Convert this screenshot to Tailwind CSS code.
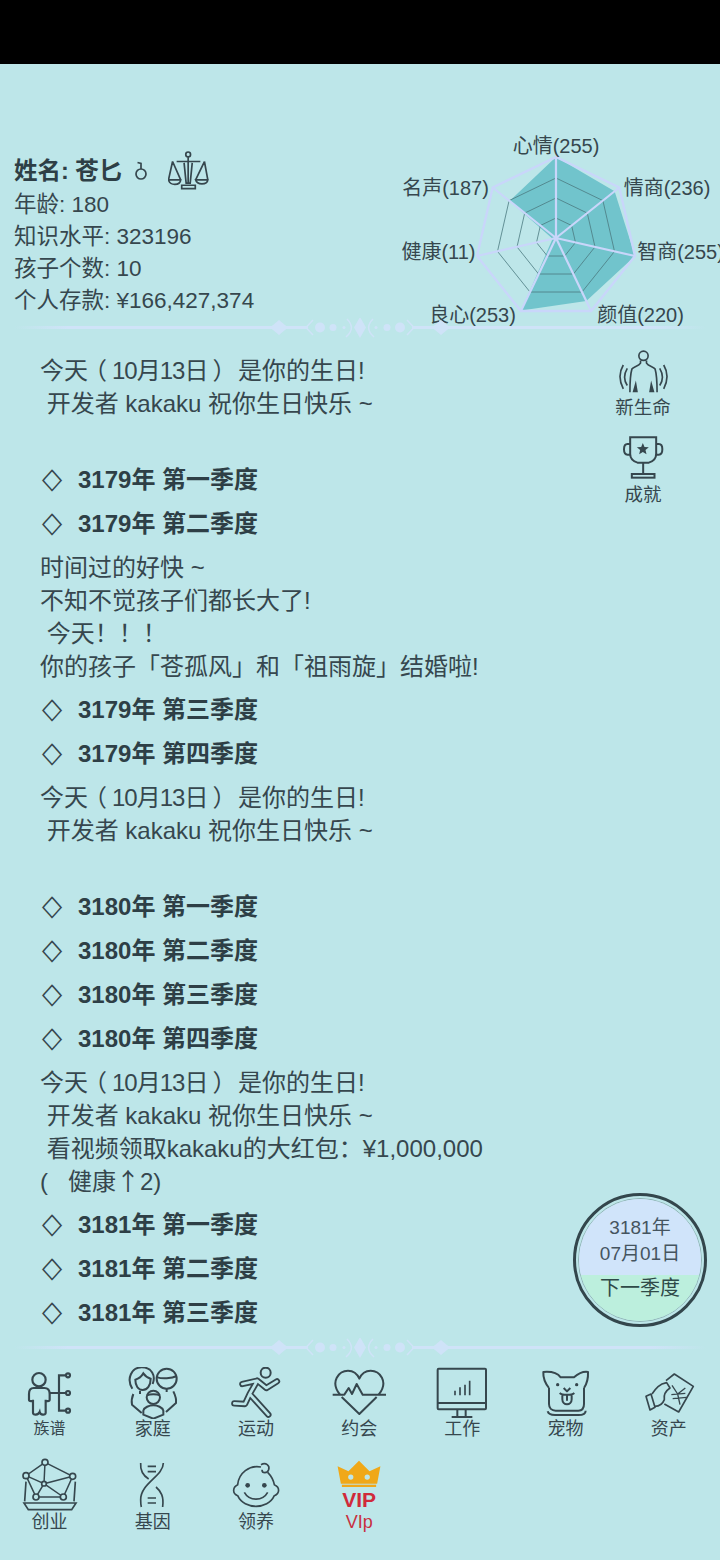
<!DOCTYPE html>
<html lang="zh"><head><meta charset="utf-8">
<script src="https://cdn.jsdelivr.net/npm/@tailwindcss/browser@4"></script>
</head>
<body class="m-0">
<div class="relative w-[720px] h-[1560px] overflow-hidden bg-[#bde6e9] text-[#36474e] font-['Liberation_Sans','Noto_Sans_CJK_SC',sans-serif]">
  <div class="h-16 bg-black"></div>

  <!-- header -->
  <div class="flex h-[254px]">
    <div class="flex-1 pl-[14px] pt-[91px] text-[22.5px] leading-[32px]">
      <div class="flex items-center h-8 font-bold text-[#2e3f46] text-[23.5px] mb-[2px]">
        <span>姓名: 苍匕</span>
        <svg class="ml-[11px]" width="16" height="20" viewBox="0 0 16 20" fill="none" stroke="#36474e" stroke-width="1.7"><circle cx="8" cy="13" r="5"/><path d="M8 8V2.500L4.500 1.500"/></svg>
        <svg class="ml-[19px]" width="41" height="40" viewBox="505 65 120 118" fill="none" stroke="#36474e" stroke-width="5"><circle cx="564" cy="75" r="7"/><path d="M564 82V160M530 96H600M518 96L506 150M518 96L542 150M612 96L586 150M612 96L622 150M506 150H542C540 168 510 168 506 150ZM586 150H622C620 166 590 166 586 150ZM552 100L558 160H570L576 100M545 176H585V166H545Z"/></svg>
      </div>
      <div>年龄: 180</div>
      <div>知识水平: 323196</div>
      <div>孩子个数: 10</div>
      <div>个人存款: ¥166,427,374</div>
    </div>
    <div class="w-[330px] shrink-0 pt-[61px]">
      <svg width="330" height="193" viewBox="390 125 330 193" class="overflow-visible">
        <g transform="translate(556 238)" fill="none">
          <polygon points="0,-81 58.6,-46.7 79,18 30.3,63 -34.8,72.4 -3.4,.8 -46.4,-37" fill="#71c4cc" stroke="none"/>
          <polygon points="0,-20 15.6,-12.5 19.5,4.5 8.7,18 -8.7,18 -19.5,4.5 -15.6,-12.5" stroke="#4b7a80" stroke-width=".8"/>
          <polygon points="0,-40 31.3,-24.9 39,8.9 17.4,36 -17.4,36 -39,8.9 -31.3,-24.9" stroke="#4b7a80" stroke-width=".8"/>
          <polygon points="0,-60 46.9,-37.4 58.5,13.4 26,54 -26,54 -58.5,13.4 -46.9,-37.4" stroke="#4b7a80" stroke-width=".8"/>
          <polygon points="0,-81 63.3,-50.5 79,18 35.1,73 -35.1,73 -79,18 -63.3,-50.5" stroke="#c9d6fa" stroke-width="2.4"/>
          <path d="M0 0V-81M0 0L63.3 -50.5M0 0L79 18M0 0L35.1 73M0 0L-35.1 73M0 0L-79 18M0 0L-63.3 -50.5" stroke="#c9d6fa" stroke-width="2.2"/>
        </g>
        <g font-size="20" fill="#36474e" text-anchor="middle">
          <text x="556" y="153">心情(255)</text>
          <text x="667" y="195">情商(236)</text>
          <text x="680.500" y="259">智商(255)</text>
          <text x="640.500" y="322">颜值(220)</text>
          <text x="472.500" y="322">良心(253)</text>
          <text x="438.500" y="259">健康(11)</text>
          <text x="445.500" y="195">名声(187)</text>
        </g>
      </svg>
    </div>
  </div>

  <!-- divider -->
  <svg class="block" width="720" height="20" viewBox="0 318 720 20" fill="#cfe3f8">
    <defs><linearGradient id="fade" x1="0" x2="1" y1="0" y2="0"><stop offset="0" stop-color="#cfe3f8" stop-opacity="0"/><stop offset=".15" stop-color="#cfe3f8"/><stop offset=".85" stop-color="#cfe3f8"/><stop offset="1" stop-color="#cfe3f8" stop-opacity="0"/></linearGradient></defs>
    <rect x="14" y="326" width="360" height="3" fill="url(#fade)" clip-path="inset(0 66px 0 0)"/><rect x="346" y="326" width="360" height="3" fill="url(#fade)" clip-path="inset(0 0 0 66px)"/>
    <path d="M279 320L288 327.500L279 335L270 327.500ZM441 320L450 327.500L441 335L432 327.500ZM360 317L366 327.500L360 338L354 327.500Z"/>
    <circle cx="320" cy="327.500" r="5"/><circle cx="333" cy="327.500" r="3.500"/><circle cx="344" cy="327.500" r="1.500"/><circle cx="376" cy="327.500" r="1.500"/><circle cx="387" cy="327.500" r="3.500"/><circle cx="400" cy="327.500" r="5"/>
    <path d="M313 320L306 327.500L313 335M347 319C353 325 353 331 346 337M373 319C367 325 367 331 374 337M407 320L414 327.500L407 335" fill="none" stroke="#cfe3f8" stroke-width="1.500"/>
  </svg>

  <!-- list -->
  <div class="h-[1000px] overflow-hidden pl-10 pt-[16px] text-[24px] leading-[33px]">
    <div class="pb-[4px] whitespace-pre-wrap"><div>今天<span class="relative -left-[5px] font-['Noto_Sans_CJK_TC'] leading-[0]">（</span><span class="tracking-[-1px]">10月13日</span><span class="relative left-[5px] font-['Noto_Sans_CJK_TC'] leading-[0]">）</span> 是你的生日!</div><div> 开发者 kakaku 祝你生日快乐 ~</div><div> </div></div>
    <div class="flex items-center h-11 font-bold text-[#2e3f46]"><span class="w-[38px] font-normal font-['DejaVu_Sans'] text-[#36474e] leading-[0]"><span class="inline-block w-[24px] text-center text-[29px] scale-x-[.9]">◇</span></span>3179年 第一季度</div>
    <div class="flex items-center h-11 font-bold text-[#2e3f46]"><span class="w-[38px] font-normal font-['DejaVu_Sans'] text-[#36474e] leading-[0]"><span class="inline-block w-[24px] text-center text-[29px] scale-x-[.9]">◇</span></span>3179年 第二季度</div>
    <div class="pt-[6px] pb-[4px] whitespace-pre-wrap"><div>时间过的好快 ~</div><div>不知不觉孩子们都长大了!</div><div> 今天<span class="font-['Noto_Sans_CJK_TC'] leading-[0]">！！！</span></div><div>你的孩子「苍孤风」和「祖雨旋」结婚啦!</div></div>
    <div class="flex items-center h-11 font-bold text-[#2e3f46]"><span class="w-[38px] font-normal font-['DejaVu_Sans'] text-[#36474e] leading-[0]"><span class="inline-block w-[24px] text-center text-[29px] scale-x-[.9]">◇</span></span>3179年 第三季度</div>
    <div class="flex items-center h-11 font-bold text-[#2e3f46]"><span class="w-[38px] font-normal font-['DejaVu_Sans'] text-[#36474e] leading-[0]"><span class="inline-block w-[24px] text-center text-[29px] scale-x-[.9]">◇</span></span>3179年 第四季度</div>
    <div class="pt-[6px] pb-[4px] whitespace-pre-wrap"><div>今天<span class="relative -left-[5px] font-['Noto_Sans_CJK_TC'] leading-[0]">（</span><span class="tracking-[-1px]">10月13日</span><span class="relative left-[5px] font-['Noto_Sans_CJK_TC'] leading-[0]">）</span> 是你的生日!</div><div> 开发者 kakaku 祝你生日快乐 ~</div><div> </div></div>
    <div class="flex items-center h-11 font-bold text-[#2e3f46]"><span class="w-[38px] font-normal font-['DejaVu_Sans'] text-[#36474e] leading-[0]"><span class="inline-block w-[24px] text-center text-[29px] scale-x-[.9]">◇</span></span>3180年 第一季度</div>
    <div class="flex items-center h-11 font-bold text-[#2e3f46]"><span class="w-[38px] font-normal font-['DejaVu_Sans'] text-[#36474e] leading-[0]"><span class="inline-block w-[24px] text-center text-[29px] scale-x-[.9]">◇</span></span>3180年 第二季度</div>
    <div class="flex items-center h-11 font-bold text-[#2e3f46]"><span class="w-[38px] font-normal font-['DejaVu_Sans'] text-[#36474e] leading-[0]"><span class="inline-block w-[24px] text-center text-[29px] scale-x-[.9]">◇</span></span>3180年 第三季度</div>
    <div class="flex items-center h-11 font-bold text-[#2e3f46]"><span class="w-[38px] font-normal font-['DejaVu_Sans'] text-[#36474e] leading-[0]"><span class="inline-block w-[24px] text-center text-[29px] scale-x-[.9]">◇</span></span>3180年 第四季度</div>
    <div class="pt-[6px] pb-[4px] whitespace-pre-wrap"><div>今天<span class="relative -left-[5px] font-['Noto_Sans_CJK_TC'] leading-[0]">（</span><span class="tracking-[-1px]">10月13日</span><span class="relative left-[5px] font-['Noto_Sans_CJK_TC'] leading-[0]">）</span> 是你的生日!</div><div> 开发者 kakaku 祝你生日快乐 ~</div><div> 看视频领取kakaku的大红包<span class="font-['Noto_Sans_CJK_TC'] leading-[0]">：</span>¥1,000,000</div><div>(   健康<span class="font-['Noto_Sans_CJK_SC'] leading-[0]">↑</span>2)</div></div>
    <div class="flex items-center h-11 font-bold text-[#2e3f46]"><span class="w-[38px] font-normal font-['DejaVu_Sans'] text-[#36474e] leading-[0]"><span class="inline-block w-[24px] text-center text-[29px] scale-x-[.9]">◇</span></span>3181年 第一季度</div>
    <div class="flex items-center h-11 font-bold text-[#2e3f46]"><span class="w-[38px] font-normal font-['DejaVu_Sans'] text-[#36474e] leading-[0]"><span class="inline-block w-[24px] text-center text-[29px] scale-x-[.9]">◇</span></span>3181年 第二季度</div>
    <div class="flex items-center h-11 font-bold text-[#2e3f46]"><span class="w-[38px] font-normal font-['DejaVu_Sans'] text-[#36474e] leading-[0]"><span class="inline-block w-[24px] text-center text-[29px] scale-x-[.9]">◇</span></span>3181年 第三季度</div>
  </div>

  <!-- divider 2 -->
  <svg class="block" width="720" height="20" viewBox="0 318 720 20" fill="#cfe3f8">
    <rect x="14" y="326" width="360" height="3" fill="url(#fade)" clip-path="inset(0 66px 0 0)"/><rect x="346" y="326" width="360" height="3" fill="url(#fade)" clip-path="inset(0 0 0 66px)"/>
    <path d="M279 320L288 327.500L279 335L270 327.500ZM441 320L450 327.500L441 335L432 327.500ZM360 317L366 327.500L360 338L354 327.500Z"/>
    <circle cx="320" cy="327.500" r="5"/><circle cx="333" cy="327.500" r="3.500"/><circle cx="344" cy="327.500" r="1.500"/><circle cx="376" cy="327.500" r="1.500"/><circle cx="387" cy="327.500" r="3.500"/><circle cx="400" cy="327.500" r="5"/>
    <path d="M313 320L306 327.500L313 335M347 319C353 325 353 331 346 337M373 319C367 325 367 331 374 337M407 320L414 327.500L407 335" fill="none" stroke="#cfe3f8" stroke-width="1.500"/>
  </svg>

  <!-- nav -->
  <div class="ml-[-2px] pt-[9px] grid grid-cols-[repeat(7,103.2px)] text-[18px] leading-6">
    <div class="flex flex-col items-center h-[91px]">
      <svg width="54" height="52" viewBox="70 37 162 156" fill="none" stroke="#36474e" stroke-width="6.5"><circle cx="118" cy="75" r="20"/><path d="M102 100H134C145 100 150 108 150 118V135C150 140 138 142 138 135V175C138 182 122 182 120 172C116 182 100 182 100 175V135C100 142 88 140 88 135V118C88 108 92 100 102 100ZM150 115H178M198 62H178V168H198M178 115H198"/><circle cx="205" cy="62" r="6"/><circle cx="205" cy="115" r="6"/><circle cx="205" cy="168" r="6"/></svg>
      <span class="text-[16px] leading-5 mt-0">族谱</span>
    </div>
    <div class="flex flex-col items-center h-[91px]">
      <svg width="54" height="52" viewBox="378 37 162 156" fill="none" stroke="#36474e" stroke-width="6"><path d="M397 102C378 72 395 38 425 38C455 38 468 62 458 88"/><path d="M406 75C418 72 425 65 430 56C436 65 445 70 452 72C452 92 442 106 428 106C414 106 406 92 406 75Z"/><circle cx="500" cy="72" r="30"/><path d="M472 68C485 72 515 72 530 64M420 108V118M500 102V112"/><path d="M400 118C394 132 394 140 396 150L425 175M520 110C526 122 530 130 528 145L498 172"/><circle cx="460" cy="128" r="20"/><path d="M441 122C450 118 470 118 480 122"/><path d="M430 168C432 158 448 152 460 152C472 152 488 158 490 168V180L460 192L430 180Z"/></svg>
      <span class="-mt-[2px]">家庭</span>
    </div>
    <div class="flex flex-col items-center h-[91px]">
      <svg width="54" height="52" viewBox="690 37 162 156" fill="none" stroke-linecap="round" stroke-linejoin="round"><circle cx="800" cy="54" r="15" stroke="#36474e" stroke-width="6"/><path d="M834 80L802 100L775 78L730 88M775 78L752 118L808 180M752 118L738 148L706 146" stroke="#36474e" stroke-width="19"/><path d="M834 80L802 100L775 78L730 88M775 78L752 118L808 180M752 118L738 148L706 146" stroke="#bde6e9" stroke-width="8"/></svg>
      <span class="-mt-[2px]">运动</span>
    </div>
    <div class="flex flex-col items-center h-[91px]">
      <svg width="54" height="52" viewBox="68 37 162 156" fill="none" stroke="#36474e" stroke-width="6" stroke-linejoin="round"><path d="M92 120C60 80 90 48 116 48C132 48 144 58 150 72C156 58 168 48 184 48C210 48 240 80 208 120M97 127L150 178L202 127"/><path d="M70 120H105L118 100L128 118L142 88L160 120H230"/></svg>
      <span class="-mt-[2px]">约会</span>
    </div>
    <div class="flex flex-col items-center h-[91px]">
      <svg width="54" height="52" viewBox="380 37 162 156" fill="none" stroke="#36474e" stroke-width="6"><rect x="388" y="42" width="145" height="122" rx="3"/><path d="M388 145H533M447 165V187M472 165V187M430 187H492"/><path d="M440 108V122M455 98V122M470 90V122M484 78V122" stroke-width="5"/></svg>
      <span class="-mt-[2px]">工作</span>
    </div>
    <div class="flex flex-col items-center h-[91px]">
      <svg width="54" height="52" viewBox="690 37 162 156" fill="none" stroke="#36474e" stroke-width="6" stroke-linejoin="round"><path d="M720 100V148C720 160 728 168 740 168H808C820 168 825 160 825 148V100"/><path d="M720 100C708 85 702 70 703 52C725 50 745 55 755 68H795C810 55 825 50 837 52C838 72 835 85 825 100"/><path d="M716 170C718 178 728 181 738 181H808C820 181 830 178 830 168"/><circle cx="746" cy="90" r="5" fill="#36474e" stroke="none"/><circle cx="803" cy="90" r="5" fill="#36474e" stroke="none"/><path d="M764 100L774 110L784 100M752 115C760 122 788 122 796 115M760 120V134C760 154 788 154 788 134V120M774 122V138"/></svg>
      <span class="-mt-[2px]">宠物</span>
    </div>
    <div class="flex flex-col items-center h-[91px]">
      <svg width="54" height="52" viewBox="998 37 162 156" fill="none" stroke="#36474e" stroke-width="5" stroke-linejoin="round"><path d="M1070 78L1095 58L1152 95L1108 172L1065 148"/><path d="M1010 125L1025 118L1037 158L1022 166Z"/><path d="M1028 118C1040 100 1050 88 1072 84L1082 100C1070 108 1062 118 1065 135C1060 148 1048 155 1037 155"/><path d="M1088 92L1105 118L1128 100M1105 118L1112 150M1086 120L1128 116M1090 132L1132 128" stroke-width="4"/></svg>
      <span class="-mt-[2px]">资产</span>
    </div>

    <div class="flex flex-col items-center h-[91px]">
      <svg width="56" height="54" viewBox="66 25 168 162" fill="none" stroke="#36474e" stroke-width="5"><path d="M135 38L78 78L108 142H190L218 80L135 38M135 38L132 102L78 78M132 102L218 80M132 102L108 142M132 102L190 142" stroke-width="4.500"/><g fill="#bde6e9" stroke-width="5"><circle cx="135" cy="38" r="9"/><circle cx="78" cy="78" r="9"/><circle cx="218" cy="80" r="9"/><circle cx="132" cy="102" r="7"/><circle cx="108" cy="142" r="9"/><circle cx="190" cy="142" r="9"/></g><path d="M78 96L74 155M226 96L222 155M72 160H228L215 180H85Z"/></svg>
      <span class="-mt-[2px]">创业</span>
    </div>
    <div class="flex flex-col items-center h-[91px]">
      <svg width="56" height="54" viewBox="377 25 168 162" fill="none" stroke="#36474e" stroke-width="5"><path d="M424 40C422 65 432 78 448 88M470 112C485 125 494 140 490 172M492 40C492 80 424 100 424 150C424 160 424 165 426 172M445 50H470M445 66H470M445 145H470M445 160H470"/></svg>
      <span class="-mt-[2px]">基因</span>
    </div>
    <div class="flex flex-col items-center h-[91px]">
      <svg width="56" height="54" viewBox="686 25 168 162" fill="none" stroke="#36474e" stroke-width="5"><path d="M785 52C750 45 718 70 715 105C700 112 698 132 715 138C725 160 748 170 770 170C792 170 815 160 825 138C842 132 842 112 825 105C822 90 815 78 805 68"/><path d="M785 45C800 37 812 48 808 60C804 72 788 72 788 60"/><circle cx="745" cy="107" r="7" fill="#36474e" stroke="none"/><circle cx="795" cy="107" r="7" fill="#36474e" stroke="none"/><path d="M735 128C750 155 790 155 805 128"/></svg>
      <span class="-mt-[2px]">领养</span>
    </div>
    <div class="flex flex-col items-center h-[91px] text-[#c8303f]">
      <div class="relative w-[56px] h-[54px]">
        <svg class="absolute left-[6px] top-[2px]" width="44" height="27" viewBox="1015 36 130 82" fill="#f0a818"><path d="M1015 55L1048 70L1080 38L1112 70L1145 55L1135 108H1025Z"/><rect x="1028" y="111" width="104" height="7"/><circle cx="1055" cy="88" r="8" fill="#bde6e9"/><circle cx="1105" cy="88" r="8" fill="#bde6e9"/></svg>
        <span class="absolute left-0 right-0 top-[30px] text-center text-[21px] leading-[24px] font-bold text-[#d02a3b]">VIP</span>
      </div>
      <span class="-mt-[2px]">VIp</span>
    </div>
  </div>

  <!-- side buttons, floating over the list -->
  <div class="absolute left-[603px] top-[349px] w-20 flex flex-col items-center text-[18.5px] leading-6">
    <svg width="53" height="45" viewBox="75 30 160 135" fill="none" stroke="#36474e" stroke-width="5"><circle cx="155" cy="50" r="14"/><path d="M146 64V72C140 82 125 82 120 90C114 110 114 135 114 160M164 64V72C170 82 185 82 190 90C196 110 196 135 196 160"/><path d="M122 160L132 125L138 160ZM188 160L178 125L172 160Z" fill="#36474e" stroke="none"/><path d="M106 88C96 105 96 125 106 140M94 78C81 100 81 125 94 150M204 88C214 105 214 125 204 140M216 78C229 100 229 125 216 150"/></svg>
    <span class="mt-[2px]">新生命</span>
    <svg class="mt-[15px]" width="43" height="44" viewBox="98 285 128 132" fill="none" stroke="#36474e" stroke-width="6"><path d="M122 292H200V342C200 356 190 364 178 368H144C132 364 122 356 122 342Z"/><path d="M122 312H114C100 312 100 344 114 344H124M200 312H208C222 312 222 344 208 344H198M161 368V402"/><rect x="127" y="402" width="68" height="11"/><path d="M160 309L165 321L178 322L168 330L171 343L160 336L149 343L152 330L142 322L155 321Z" fill="#36474e" stroke="none"/></svg>
    <span class="mt-[4px]">成就</span>
  </div>

  <!-- next season button -->
  <div class="absolute left-[573px] top-[1193px] w-[134px] h-[134px] rounded-full border-[3px] border-[#33464c] p-[2px]">
    <div class="w-full h-full rounded-full overflow-hidden border border-[#8fb3b5] flex flex-col items-center text-[20px] leading-[26px]">
      <div class="h-[76px] w-full shrink-0 bg-[#d0e4fa] flex flex-col items-center justify-end pb-[8px] text-[19px] text-[#45545f]"><span>3181年</span><span>07月01日</span></div>
      <div class="flex-1 w-full bg-[#bcefdd] text-center text-[#2f4a48]">下一季度</div>
    </div>
  </div>
</div>
</body></html>
